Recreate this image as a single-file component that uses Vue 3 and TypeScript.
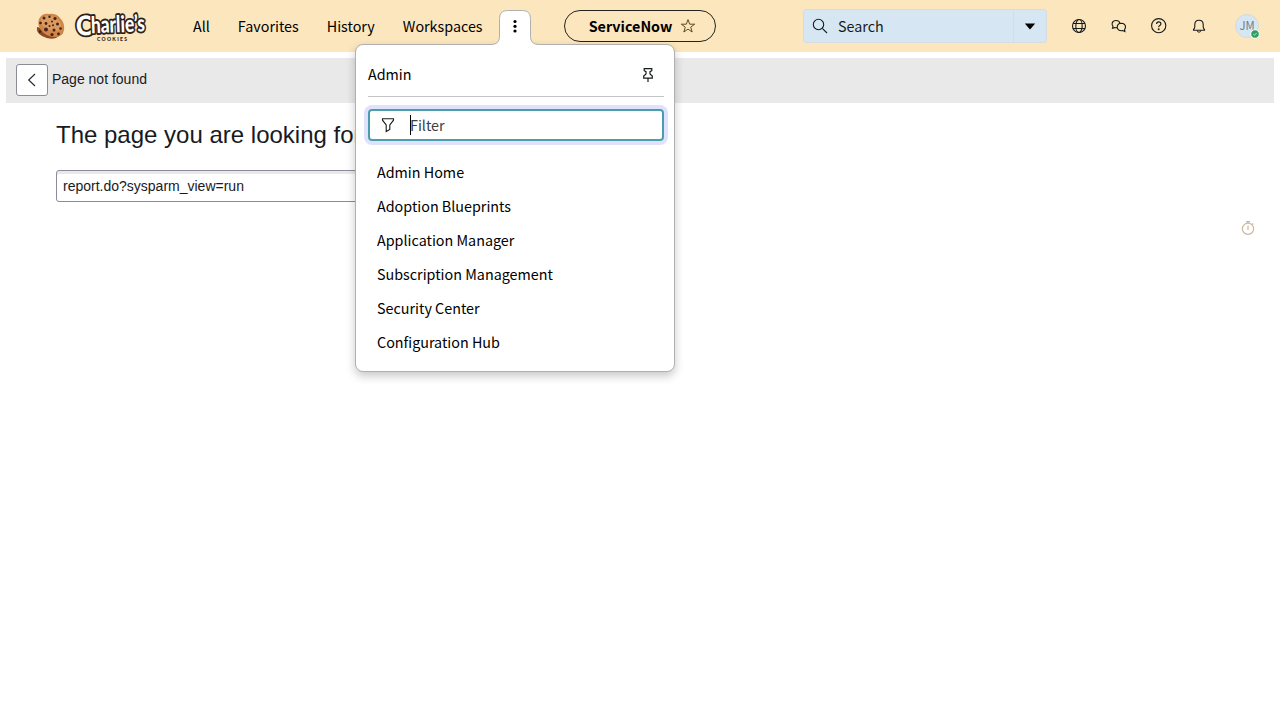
<script setup lang="ts">
const navItems: string[] = ['All', 'Favorites', 'History', 'Workspaces']
const adminItems: string[] = [
  'Admin Home',
  'Adoption Blueprints',
  'Application Manager',
  'Subscription Management',
  'Security Center',
  'Configuration Hub',
]
</script>

<template>
  <div class="page">
    <header class="topbar">
      <svg class="logo" width="112" height="32" viewBox="0 0 112 32">
        <g transform="translate(0,3)">
          <path d="M1 14Q0 20 6 23Q13 27 20 25L27 20Z" fill="#8c4a24" />
          <path d="M3 6Q6 0 13 1Q20 0 24 5Q29 10 28 17Q27 24 19 24Q10 24 5 17Q1 12 3 6Z" fill="#cf8648" />
          <path d="M5 6Q9 1 15 3Q22 4 25 11Q25 17 21 18Q11 18 6 12Z" fill="#dc9a5e" />
          <g fill="#42241a">
            <circle cx="8" cy="5" r="1.500" /><circle cx="13.500" cy="3.800" r="1.200" />
            <circle cx="19" cy="5.500" r="1.600" /><circle cx="4.500" cy="10" r="1.300" />
            <circle cx="10" cy="10.500" r="1.400" /><circle cx="16" cy="8.500" r="1" />
            <circle cx="13.500" cy="13" r="1" /><circle cx="17" cy="12.200" r="1" />
            <circle cx="21.500" cy="11" r="1.500" /><circle cx="10" cy="16.500" r="1.900" />
            <circle cx="18" cy="17" r="1.500" /><circle cx="24.500" cy="15.500" r="1.300" />
            <circle cx="16" cy="21.500" r="1.600" /><circle cx="22.500" cy="21" r="1.400" />
            <circle cx="4" cy="18.500" r="1.300" />
          </g>
        </g>
        <g class="wordmark" transform="rotate(-2 75 16)">
          <text x="40" y="24.300" font-size="27" textLength="17" lengthAdjust="spacingAndGlyphs">C</text>
          <text x="55" y="22.500" font-size="23" textLength="54" lengthAdjust="spacingAndGlyphs">harlie’s</text>
        </g>
        <text class="tagline" x="61" y="30.500" textLength="30">COOKIES</text>
      </svg>

      <nav class="nav">
        <span v-for="item in navItems" :key="item">{{ item }}</span>
      </nav>

      <div class="more">
        <svg class="tab" width="48" height="36" viewBox="0 0 48 36">
          <path d="M0 36V34.500Q8.500 34.500 8.500 26.500V8.500Q8.500 .5 16.500 .5H31.500Q39.500 .5 39.500 8.500V26.500Q39.500 34.500 47.500 34.500V36Z" fill="#fff" />
          <path d="M0 34.500Q8.500 34.500 8.500 26.500V8.500Q8.500 .5 16.500 .5H31.500Q39.500 .5 39.500 8.500V26.500Q39.500 34.500 48 34.500" fill="none" stroke="#b0b0b0" />
          <g><circle cx="24" cy="11.500" r="1.600" /><circle cx="24" cy="16.300" r="1.600" /><circle cx="24" cy="21" r="1.600" /></g>
        </svg>
      </div>

      <div class="context">
        <b>ServiceNow</b>
        <svg width="16" height="16" viewBox="0 0 16 16" fill="none" stroke="#5c4c22">
          <path d="M8 1.600L9.700 6.200H14.700L10.700 9.200L12.200 14L8 11.100L3.800 14L5.300 9.200L1.300 6.200H6.300Z" />
        </svg>
      </div>

      <div class="search">
        <div class="search-field">
          <svg width="16" height="16" viewBox="0 0 16 16" fill="none" stroke="#161b1c" stroke-width="1.100">
            <circle cx="6.500" cy="6.500" r="5.200" /><path d="M10.300 10.300L15 15" />
          </svg>
          <span>Search</span>
        </div>
        <div class="search-more">
          <svg width="12" height="7" viewBox="0 0 12 7"><path d="M.8 .5H11.200L6 6.500Z" /></svg>
        </div>
      </div>

      <div class="tools">
        <svg width="16" height="16" viewBox="0 0 16 16">
          <circle cx="8" cy="8" r="6.500" /><ellipse cx="8" cy="8" rx="3.200" ry="6.500" />
          <path d="M2 5.500H14M2 10.500H14" />
        </svg>
        <svg width="16" height="16" viewBox="0 0 16 16">
          <path d="M6.200 9.500Q5 10 3.800 9.600L1.500 10.300L2 8.200Q.7 6.800 1.200 5Q2 2.500 5 2.500Q8.300 2.500 8.800 5" />
          <path d="M10.200 5.200Q14.500 5.400 14.500 9Q14.500 10.300 13.600 11.300L13.900 13.500L11.800 12.600Q6.700 13.200 6.200 9.200Q6.300 5.300 10.200 5.200Z" />
        </svg>
        <svg width="16" height="16" viewBox="0 0 16 16">
          <circle cx="7.700" cy="7.700" r="7.100" />
          <path d="M5.600 6Q5.600 3.900 7.700 3.900Q9.900 3.900 9.900 5.900Q9.900 6.900 8.700 7.500Q7.700 8 7.700 9.300" />
          <circle cx="7.700" cy="11.200" r=".4" />
        </svg>
        <svg width="16" height="16" viewBox="0 0 16 16">
          <path d="M2.500 11.500Q3.800 10.500 3.800 8.500V6.500Q3.800 2.200 8 2.200Q12.200 2.200 12.200 6.500V8.500Q12.200 10.500 13.500 11.500V12.300H2.500Z" />
          <path d="M6.300 12.500Q6.600 14.200 8 14.200Q9.400 14.200 9.700 12.500" />
        </svg>
      </div>
      <div class="avatar">
        JM
        <svg class="presence" width="10" height="10" viewBox="0 0 10 10">
          <circle cx="5" cy="5" r="4.300" fill="#2f9e63" stroke="#fff" />
          <path d="M3.300 5.100L4.500 6.200L6.700 3.900" fill="none" stroke="#bfe5cf" />
        </svg>
      </div>
    </header>

    <main>
      <div class="titlebar">
        <button class="back" aria-label="Back">
          <svg width="16" height="16" viewBox="0 0 16 16" fill="none" stroke="#22252d" stroke-width="1.100"><path d="M11 2L4.700 8L11 14" /></svg>
        </button>
        <span>Page not found</span>
      </div>
      <div class="body">
        <h1>The page you are looking for</h1>
        <div class="url">report.do?sysparm_view=run</div>
        <svg class="timer" width="16" height="16" viewBox="0 0 16 16" fill="none" stroke="#cbb79a" stroke-width="1.200">
          <circle cx="8" cy="8.800" r="5.600" /><path d="M6 1.700H10M8 1.700V3M8 5.800V10M12.300 4.500L13.300 3.500" />
        </svg>
      </div>
    </main>

    <section class="menu">
      <div class="menu-head">
        <span>Admin</span>
        <svg width="16" height="16" viewBox="0 0 16 16" fill="none" stroke="#161b1c" stroke-width="1.200">
          <path d="M4.200 1.700H11.800V3.700L10 4.600V7L12.300 9V11.200H3.700V9L6 7V4.600L4.200 3.700ZM8 11.200V15" />
        </svg>
      </div>
      <div class="filter">
        <svg width="16" height="16" viewBox="0 0 16 16" fill="none" stroke="#161b1c" stroke-width="1.100">
          <path d="M2.500 1.800H13.500V3.200L9.800 8V12.500L6.200 14.600V8L2.500 3.200Z" />
        </svg>
        <i class="caret"></i>
        <span>Filter</span>
      </div>
      <ul>
        <li v-for="item in adminItems" :key="item">{{ item }}</li>
      </ul>
    </section>
  </div>
</template>

<style>
body { background: #fff; overflow: hidden; }
</style>

<style scoped>
* { box-sizing: border-box; }
.page {
  position: relative;
  width: 1280px;
  height: 718px;
  font: 14.33px/24px "Noto Sans CJK SC", "Noto Sans", sans-serif;
  color: #000;
}
svg { display: block; flex: none; }
.topbar { display: flex; align-items: center; height: 52px; background: #fce6bd; padding-left: 36px; }
.wordmark { font-family: Lato, sans-serif; font-weight: 900; fill: #fff; stroke: #2d211c; stroke-width: 3.8px; paint-order: stroke; stroke-linejoin: round; }
.tagline { font: 900 5px Lato, sans-serif; fill: #2d211c; }
.logo { overflow: visible; }
.nav { display: flex; gap: 28px; margin-left: 45px; white-space: nowrap; width: 290px; }
.more { position: relative; z-index: 3; width: 48px; height: 52px; margin-left: 8px; padding-top: 10px; }
.context {
  display: flex; align-items: center; justify-content: center; gap: 8px;
  width: 152px; height: 32px; margin-left: 25px; padding-left: 5px;
  border: 1px solid #26241e; border-radius: 16px;
}
.context b { font-weight: 700; }
.search { display: flex; width: 244px; height: 34px; margin-left: 87px; background: #d6e6f3; border: 1px solid #d8dbe0; border-radius: 3px; color: #161b1c; }
.search-field { flex: 1; display: flex; align-items: center; gap: 10px; padding-left: 8px; }
.search-more { width: 33px; display: flex; align-items: center; justify-content: center; border-left: 1px solid #d8dbe0; }
.tools { display: flex; gap: 24px; margin-left: 24px; }
.tools svg { fill: none; stroke: #161b1c; stroke-width: 1.1px; }
.avatar {
  position: relative; width: 24px; height: 24px; margin-left: 28px;
  border-radius: 50%; border: 1px solid #d5dadd; background: #d6e6f3;
  color: #6f7e89; font: 11.3px/20px "Noto Sans CJK SC", sans-serif; text-align: center;
}
.presence { position: absolute; right: -2px; bottom: -2px; }
main { padding: 6px 6px 0; font-family: "Liberation Sans", Arial, sans-serif; color: #181a1f; }
.titlebar { display: flex; align-items: center; gap: 4px; height: 45px; padding: 0 10px 1px; background: #e9e9e9; font-size: 14px; }
.titlebar span { padding-bottom: 2px; }
.back { display: flex; align-items: center; justify-content: center; width: 32px; height: 32px; padding: 0; border: 1px solid #8b8d95; border-radius: 3px; background: #fff; }
.body { display: flex; flex-direction: column; padding: 16px 18px 0 50px; }
h1 { margin: 0; font-size: 24px; font-weight: 400; line-height: 32px; }
.url {
  width: 500px; height: 32px; margin-top: 19px; padding-left: 6px;
  border: 1px solid #8b8b9b; border-radius: 3px; box-shadow: inset 0 3px 0 #e9e9ea;
  font-size: 14px; line-height: 30px;
}
.timer { align-self: flex-end; margin-top: 18px; }
.menu {
  position: absolute; z-index: 2; left: 355px; top: 44px; width: 320px; height: 328px;
  padding: 8px 10px 0 12px; background: #fff; border: 1px solid #b0b0b0; border-radius: 8px;
  box-shadow: 0 4px 10px rgba(0, 0, 0, .22);
}
.menu-head { display: flex; justify-content: space-between; align-items: center; height: 44px; padding-right: 8px; border-bottom: 1px solid #c4c4c4; }
.menu-head span { padding-bottom: 2px; }
.filter {
  display: flex; align-items: center; height: 32px; margin-top: 12px; padding-left: 10px;
  border: 2px solid #4a9dac; border-radius: 4px; box-shadow: 0 0 0 4px #e0e2fc; color: #3c4041;
}
.caret { width: 1px; height: 20px; margin-left: 14px; background: #000; }
.filter span { margin-left: -1px; }
ul { list-style: none; margin: 14px 0 0; padding: 0 9px; }
li { height: 34px; line-height: 34px; }
</style>
